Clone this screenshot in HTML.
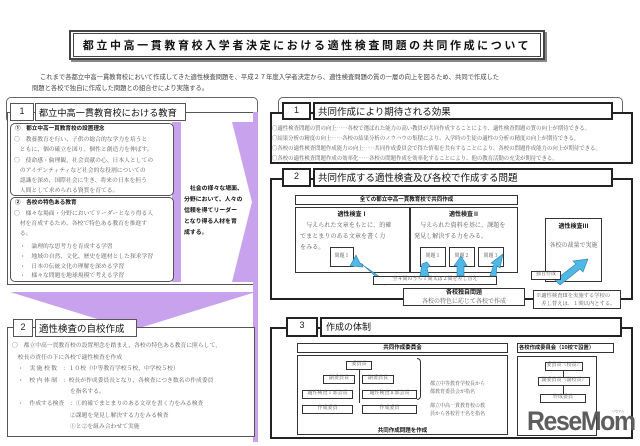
<!DOCTYPE html><html><head><meta charset="utf-8"><style>
*{margin:0;padding:0;box-sizing:border-box}
body{width:640px;height:446px;background:#fff;position:relative;overflow:hidden;font-family:"Liberation Sans","Noto Sans CJK JP",sans-serif;color:#222}
.a{position:absolute;white-space:nowrap}
.b{position:absolute;border:1px solid #333;background:#fff}
.t{position:absolute;font-size:6px;line-height:1.3;color:#555;white-space:nowrap;font-family:"Noto Serif CJK SC","Noto Sans CJK JP",serif}
.h{font-weight:bold;color:#111;font-family:"Noto Sans CJK JP",sans-serif}
.c{text-align:center}
</style></head><body>
<!-- title -->
<div class="b" style="left:69px;top:30px;width:476px;height:30px;border:2px solid #444;box-shadow:2px 2px 0 #888"></div>
<div class="b" style="left:73px;top:33px;width:468px;height:24px;border:1px solid #444"></div>
<div class="a h c" style="left:73px;top:37px;width:468px;font-size:11px;letter-spacing:2.6px;line-height:16px">都立中高一貫教育校入学者決定における適性検査問題の共同作成について</div>
<div class="t" style="left:40px;top:73px;font-size:6.3px;color:#444;font-family:'Noto Sans CJK JP',sans-serif">これまで各都立中高一貫教育校において作成してきた適性検査問題を、平成２７年度入学者決定から、適性検査問題の質の一層の向上を図るため、共同で作成した</div>
<div class="t" style="left:32px;top:84px;font-size:6.3px;color:#444;font-family:'Noto Sans CJK JP',sans-serif">問題と各校で独自に作成した問題との組合せにより実施する。</div>
<div class="b" style="left:6px;top:97px;width:252px;height:26px;border-radius:5px;border-color:#666"></div>
<div class="a h c" style="left:6px;top:103px;width:252px;font-size:9px;word-spacing:22px">自 校 作 成</div>
<div class="b" style="left:278px;top:97px;width:345px;height:26px;border-radius:5px;border-color:#666"></div>
<div class="a h c" style="left:278px;top:103px;width:345px;font-size:9px;word-spacing:22px">共 同 作 成</div>
<!-- left section 1 -->
<div class="b" style="left:7px;top:112px;width:248px;height:173px;border-color:#555"></div>
<div class="a" style="left:253px;top:112px;width:5px;height:330px;background:#c9a2ee"></div>
<svg class="a" style="left:172px;top:122px" width="84" height="162"><polygon points="0,0 9,0 9,160 0,160" fill="#c9a2ee"/><polygon points="60,0 82,0 82,160 60,160 80,80" fill="#c9a2ee"/></svg>
<div class="b" style="left:10px;top:103px;width:24px;height:18px;border-color:#555"></div>
<div class="a c" style="left:10px;top:106px;width:24px;font-size:9px">1</div>
<div class="b" style="left:35px;top:103px;width:151px;height:18px;border-color:#555"></div>
<div class="a" style="left:39px;top:105px;font-size:9.2px;color:#111">都立中高一貫教育校における教育</div>
<div class="b" style="left:10px;top:123px;width:164px;height:73px;border-radius:5px;border-color:#555"></div>
<div class="t h" style="left:15px;top:125px;font-size:5.6px">①　都立中高一貫教育校の設置理念</div>
<div class="t" style="left:14px;top:134px;line-height:10.3px;font-size:5.8px">○　教養教育を行い、子供の総合的な学力を培うと<br>　ともに、個の確立を図り、個性と創造力を伸ばす。<br>○　使命感・倫理観、社会貢献の心、日本人としての<br>　のアイデンティティなど社会的な役割についての<br>　認識を深め、国際社会に生き、将来の日本を担う<br>　人間として求められる資質を育てる。</div>
<div class="b" style="left:10px;top:197px;width:164px;height:85px;border-radius:5px;border-color:#555"></div>
<div class="t h" style="left:15px;top:199px;font-size:5.6px">②　各校の特色ある教育</div>
<div class="t" style="left:14px;top:208px;line-height:10px;font-size:5.8px">○　様々な場面・分野においてリーダーとなり得る人<br>　材を育成するため、各校で特色ある教育を推進す<br>　る。</div>
<div class="t" style="left:14px;top:241px;line-height:9.8px;font-size:5.8px">　・　論理的な思考力を育成する学習<br>　・　地域の自然、文化、歴史を題材とした探求学習<br>　・　日本の伝統文化の理解を深める学習<br>　・　様々な問題を地球規模で考える学習</div>
<div class="t h" style="left:184px;top:182px;line-height:11px;font-size:5.9px">　社会の様々な場面、<br>分野において、人々の<br>信頼を得てリーダー<br>となり得る人材を育<br>成する。</div>
<svg class="a" style="left:10px;top:292px" width="246" height="40"><polygon points="0,0 246,0 123,38" fill="#c9a2ee"/></svg>
<!-- left section 2 -->
<div class="b" style="left:7px;top:327px;width:248px;height:110px;border-color:#555"></div>
<div class="b" style="left:13px;top:319px;width:20px;height:18px;border-color:#555"></div>
<div class="a c" style="left:13px;top:322px;width:20px;font-size:9px">2</div>
<div class="b" style="left:35px;top:319px;width:102px;height:18px;border-color:#555"></div>
<div class="a" style="left:39px;top:321px;font-size:9.5px;color:#111">適性検査の自校作成</div>
<div class="t" style="left:12px;top:339px;line-height:11.6px;font-size:5.8px">○　都立中高一貫教育校の設置理念を踏まえ、各校の特色ある教育に照らして、<br>　校長の責任の下に各校で適性検査を作成<br>　・　実 施 校 数　：１０校（中等教育学校５校、中学校５校）<br>　・　校 内 体 制　：校長が作成委員長となり、各検査につき数名の作成委員<br>　　　　　　　　　　を指名する。<br>　・　作成する検査　：①的確でまとまりのある文章を書く力をみる検査<br>　　　　　　　　　　②課題を発見し解決する力をみる検査<br>　　　　　　　　　　①と②を組み合わせて実施</div>
<!-- right section 1 -->
<div class="b" style="left:270px;top:112px;width:363px;height:52px;border:2px solid #222"></div>
<div class="b" style="left:282px;top:102px;width:29px;height:18px;border:2px solid #222"></div>
<div class="a c" style="left:282px;top:105px;width:29px;font-size:9px">1</div>
<div class="b" style="left:313px;top:102px;width:300px;height:18px;border:2px solid #222"></div>
<div class="a" style="left:318px;top:104px;font-size:9.5px;color:#111">共同作成により期待される効果</div>
<div class="t" style="left:272px;top:123px;line-height:10px;font-size:5.4px">○適性検査問題の質の向上……各校で選ばれた能力の高い教員が共同作成することにより、適性検査問題の質の向上が期待できる。<br>○結果分析の精度の向上……各校の結果分析のノウハウの集積により、入学時の生徒の適性の分析の精度の向上が期待できる。<br>○各校の適性検査問題作成能力の向上……共同作成委員会で得た情報を共有することにより、各校の問題作成能力の向上が期待できる。<br>○各校の適性検査問題作成の効率化……各校の問題作成を効率化することにより、他の教育活動の充実が期待できる。</div>
<!-- right section 2 -->
<div class="b" style="left:270px;top:178px;width:363px;height:122px;border:2px solid #222"></div>
<div class="b" style="left:282px;top:168px;width:29px;height:19px;border:2px solid #222"></div>
<div class="a c" style="left:282px;top:171px;width:29px;font-size:9px">2</div>
<div class="b" style="left:313px;top:168px;width:300px;height:19px;border:2px solid #222"></div>
<div class="a" style="left:318px;top:170px;font-size:9.5px;color:#111">共同作成する適性検査及び各校で作成する問題</div>
<div class="b" style="left:295px;top:195px;width:223px;height:10px"></div>
<div class="t h c" style="left:295px;top:196px;width:223px;font-size:5.5px">全ての都立中高一貫教育校で共同作成</div>
<div class="b" style="left:295px;top:207px;width:115px;height:66px"></div>
<div class="t h c" style="left:295px;top:210px;width:115px">適性検査Ⅰ</div>
<div class="t" style="left:300px;top:219px;line-height:11px;font-size:6.1px">　与えられた文章をもとに、的確<br>でまとまりのある文章を書く力<br>をみる。</div>
<div class="b" style="left:330px;top:247px;width:24px;height:20px"></div><div class="t c" style="left:330px;top:253px;width:24px;font-size:5px">問題１</div>
<div class="b" style="left:410px;top:207px;width:108px;height:66px"></div>
<div class="t h c" style="left:410px;top:210px;width:108px">適性検査Ⅱ</div>
<div class="t" style="left:414px;top:219px;line-height:11px;font-size:6.1px">　与えられた資料を基に、課題を<br>発見し解決する力をみる。</div>
<div class="b" style="left:420px;top:247px;width:26px;height:20px"></div><div class="t c" style="left:420px;top:253px;width:26px;font-size:5px">問題１</div>
<div class="b" style="left:449px;top:247px;width:26px;height:20px"></div><div class="t c" style="left:449px;top:253px;width:26px;font-size:5px">問題２</div>
<div class="b" style="left:478px;top:247px;width:26px;height:20px"></div><div class="t c" style="left:478px;top:253px;width:26px;font-size:5px">問題３</div>
<div class="b" style="left:545px;top:218px;width:57px;height:64px"></div>
<div class="t h c" style="left:545px;top:222px;width:57px">適性検査Ⅲ</div>
<div class="t c" style="left:545px;top:241px;width:57px">各校の裁量で実施</div>
<svg class="a" style="left:270px;top:240px" width="363" height="60">
<g fill="#4fb8e6" stroke="#2a7fa8" stroke-width="0.6">
<polygon points="90,23 86,15 80,26 93,27 92,24 115,45 117,42"/>
<polygon points="150,36 152,24 157,22 160,26 157,28 160,40"/>
<polygon points="187,36 187,26 184,26 191,16 197,26 194,26 194,36"/>
<polygon points="220,36 224,24 221,23 233,14 230,28 227,26 226,38"/>
<polygon points="285,40 306,24 303,21 318,19 313,32 310,29 290,45"/>
</g></svg>
<div class="b" style="left:373px;top:276px;width:124px;height:9px"></div>
<div class="t c" style="left:373px;top:276px;width:124px;font-size:5px">全４問のうち１問又は２問を差し替え</div>
<div class="b" style="left:531px;top:271px;width:30px;height:9px"></div>
<div class="t c" style="left:531px;top:271px;width:30px;font-size:5px">独自作成</div>
<div class="b" style="left:403px;top:288px;width:122px;height:18px"></div>
<div class="t h c" style="left:403px;top:288px;width:122px">各校独自問題</div>
<div class="t c" style="left:403px;top:297px;width:122px">各校の特色に応じて各校で作成</div>
<div class="b" style="left:533px;top:290px;width:88px;height:19px"></div>
<div class="t" style="left:536px;top:291px;font-size:5.3px;line-height:8px">※適性検査Ⅲを実施する学校の<br>　差し替えは、１問以内とする。</div>
<!-- right section 3 -->
<div class="b" style="left:270px;top:327px;width:363px;height:112px;border:2px solid #222"></div>
<div class="b" style="left:286px;top:317px;width:32px;height:20px;border:2px solid #222"></div>
<div class="a c" style="left:286px;top:320px;width:32px;font-size:9px">3</div>
<div class="b" style="left:320px;top:317px;width:302px;height:20px;border:2px solid #222"></div>
<div class="a" style="left:326px;top:320px;font-size:9px;color:#111">作成の体制</div>
<div class="b" style="left:297px;top:343px;width:211px;height:10px"></div>
<div class="t h c" style="left:297px;top:344px;width:211px;font-size:5.5px">共同作成委員会</div>
<div class="b" style="left:297px;top:355px;width:211px;height:80px"></div>
<div class="b" style="left:346px;top:361px;width:26px;height:9px"></div><div class="t c" style="left:346px;top:361px;width:26px;font-size:5px">委員長</div>
<div class="a" style="left:359px;top:370px;width:1px;height:33px;background:#333"></div>
<div class="b" style="left:323px;top:375px;width:32px;height:9px"></div><div class="t c" style="left:323px;top:375px;width:32px;font-size:5px">副委員長</div>
<div class="b" style="left:362px;top:375px;width:32px;height:9px"></div><div class="t c" style="left:362px;top:375px;width:32px;font-size:5px">副委員長</div>
<div class="b" style="left:302px;top:390px;width:51px;height:9px"></div><div class="t c" style="left:302px;top:390px;width:51px;font-size:5px">適性検査Ⅰ部会長</div>
<div class="b" style="left:362px;top:390px;width:55px;height:9px"></div><div class="t c" style="left:362px;top:390px;width:55px;font-size:5px">適性検査Ⅱ部会長</div>
<div class="b" style="left:302px;top:405px;width:51px;height:9px"></div><div class="t c" style="left:302px;top:405px;width:51px;font-size:5px">作成委員</div>
<div class="b" style="left:362px;top:405px;width:55px;height:9px"></div><div class="t c" style="left:362px;top:405px;width:55px;font-size:5px">作成委員</div>
<div class="a" style="left:417px;top:358px;width:4px;height:42px;border:1px solid #333;border-left:none;border-radius:0 4px 4px 0"></div>
<div class="t" style="left:430px;top:380px;font-size:5px;line-height:8px">都立中等教育学校長から<br>都教育委員会が指名</div>
<div class="t" style="left:430px;top:402px;font-size:5px;line-height:8px">都立中高一貫教育校の教<br>員から各校若干名を指名</div>
<div class="t h c" style="left:297px;top:427px;width:211px;font-size:5.5px">共同作成問題を作成</div>
<div class="b" style="left:517px;top:343px;width:97px;height:10px"></div>
<div class="t h" style="left:519px;top:344px;font-size:5.3px">各校作成委員会（10校で設置）</div>
<div class="b" style="left:517px;top:356px;width:80px;height:80px"></div>
<div class="b" style="left:545px;top:362px;width:38px;height:9px"></div><div class="t c" style="left:545px;top:362px;width:38px;font-size:5px">委員長（校長）</div>
<div class="a" style="left:563px;top:371px;width:1px;height:25px;background:#333"></div>
<div class="b" style="left:538px;top:377px;width:52px;height:9px"></div><div class="t c" style="left:538px;top:377px;width:52px;font-size:5px">副委員長（副校長）</div>
<div class="b" style="left:540px;top:394px;width:46px;height:9px"></div><div class="t c" style="left:540px;top:394px;width:46px;font-size:5px">作成委員</div>
<!-- logo -->
<div class="a" style="left:527px;top:404px;font-size:27px;font-weight:bold;color:#5d5d5d;letter-spacing:-1.5px;line-height:34px;font-family:'Liberation Sans',sans-serif;transform:scaleX(0.92);transform-origin:left">ReseMom</div>
<div class="a" style="left:612px;top:409px;font-size:3px;color:#777">リセマム</div>
</body></html>
